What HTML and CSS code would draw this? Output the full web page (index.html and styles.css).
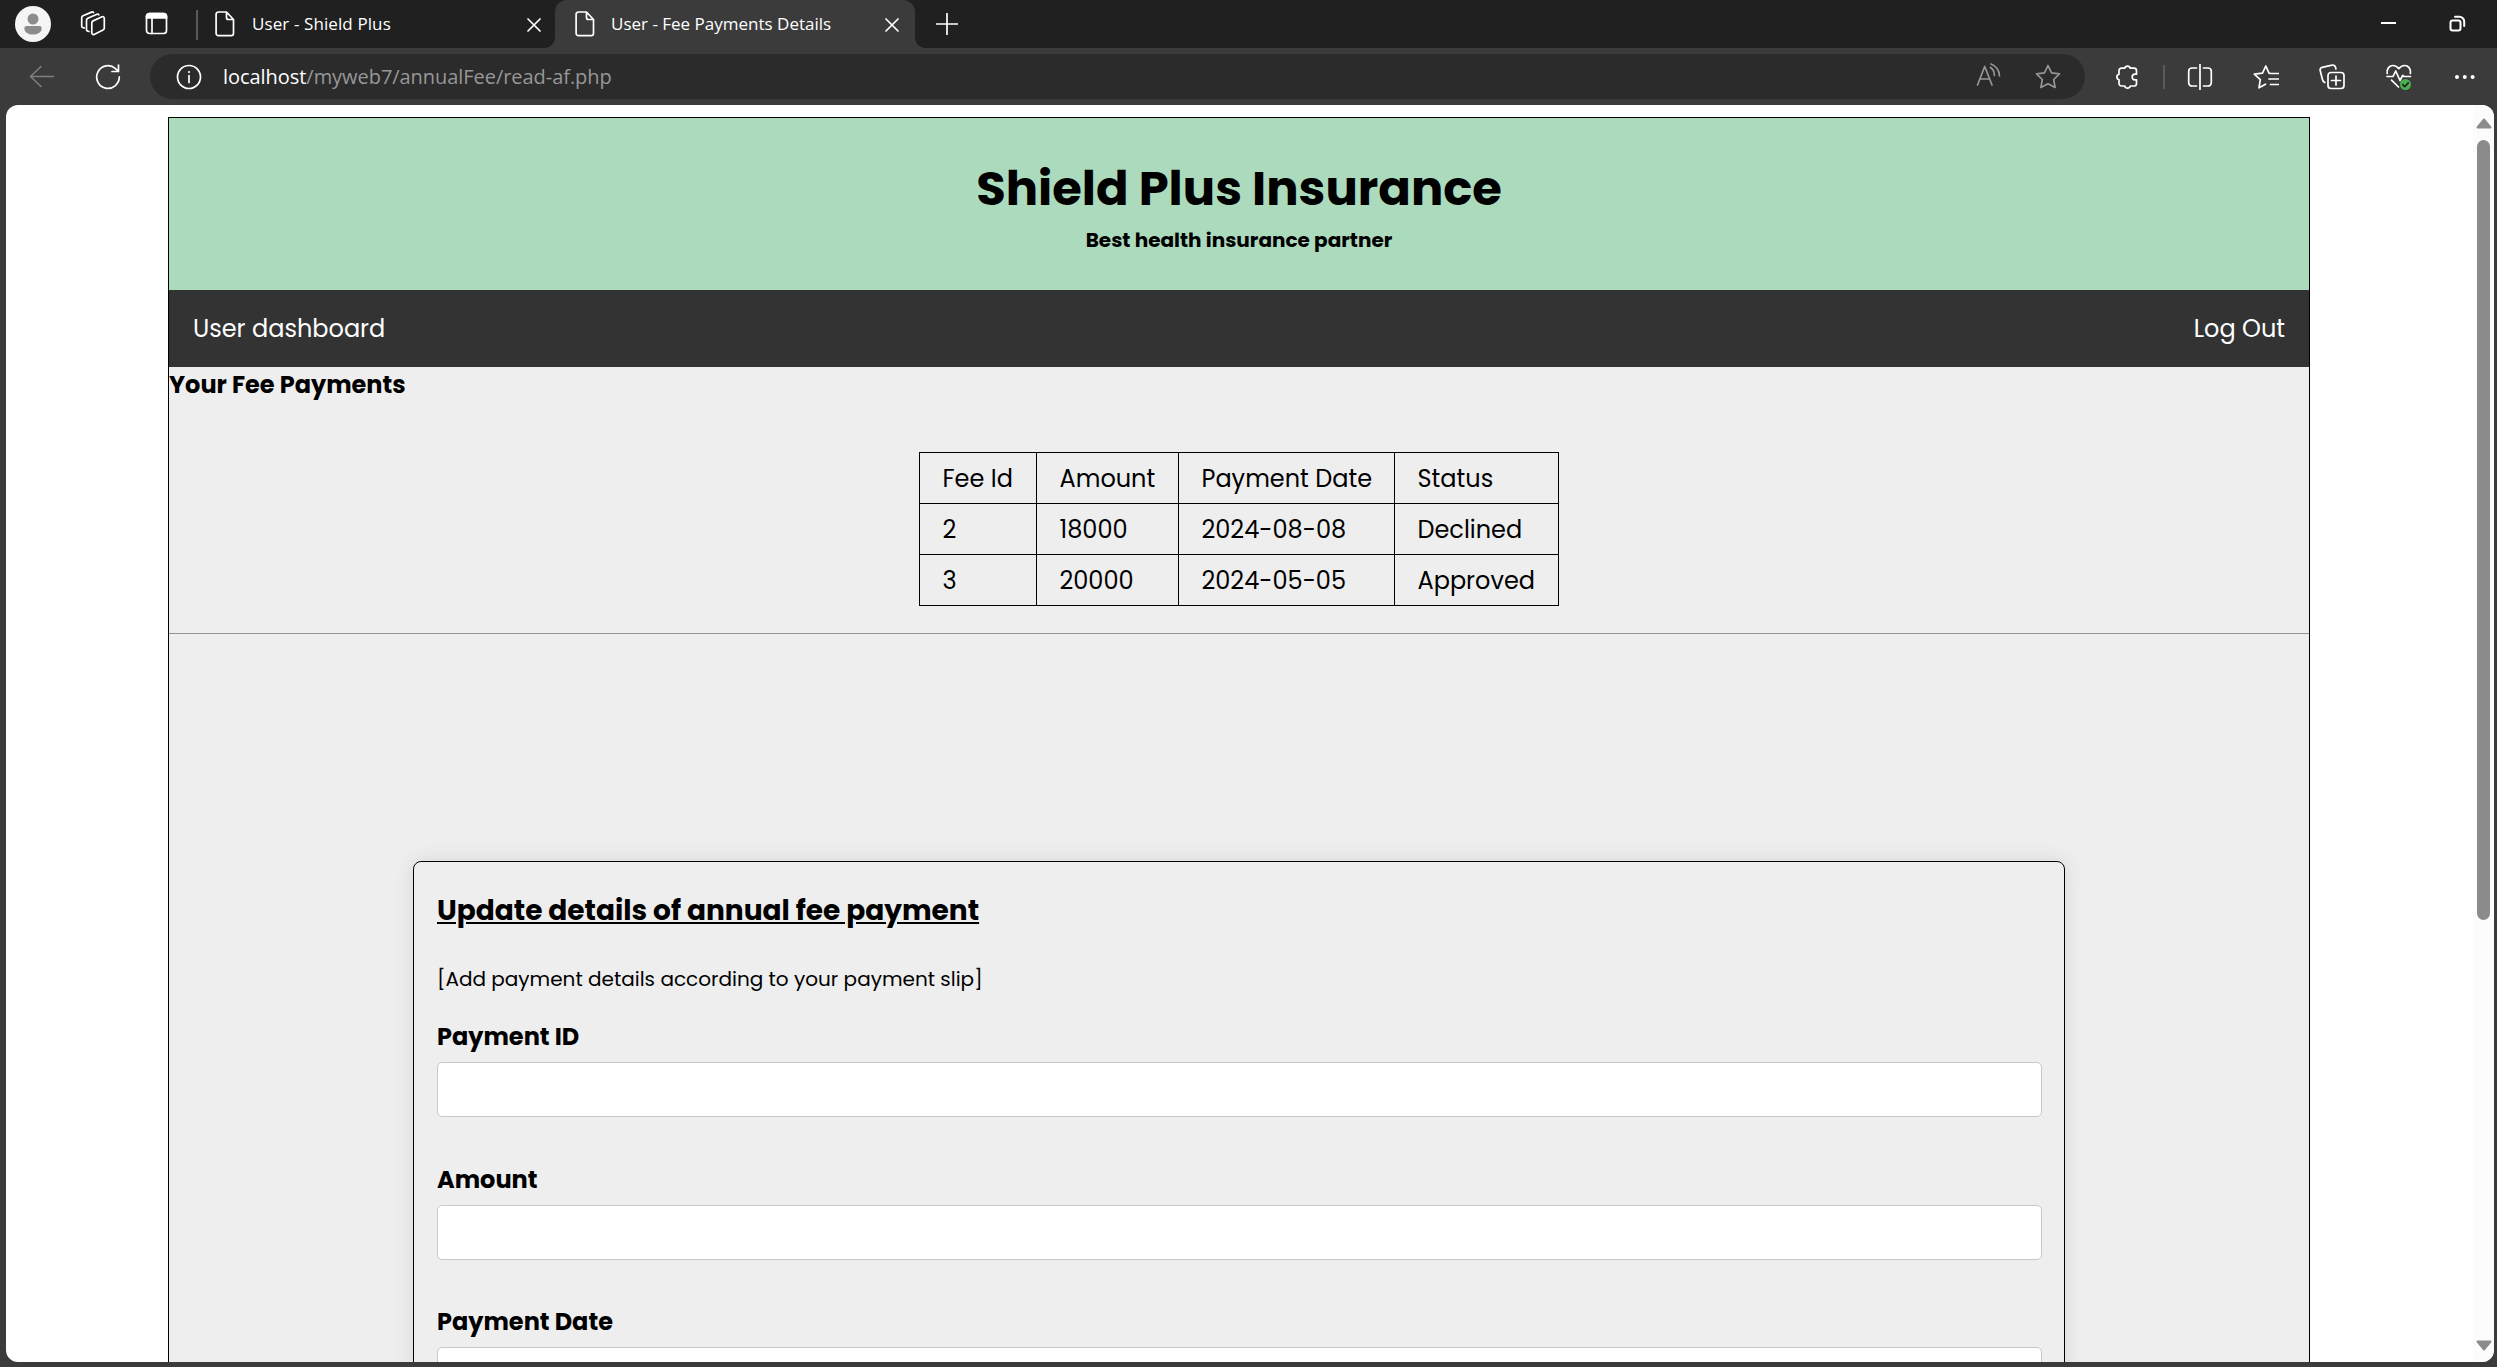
FILE: index.html
```html
<!DOCTYPE html>
<html lang="en">
<head>
<meta charset="utf-8">
<title>User - Fee Payments Details</title>
<link rel="stylesheet" href="styles.css">
</head>
<body>
<div class="browser">
  <div class="tabbar">
    <svg class="avatar" viewBox="0 0 36 36"><circle cx="18" cy="18" r="18" fill="#f5f5f5"/><circle cx="18" cy="13" r="5.500" fill="#8c8c8c"/><path d="M11.500 20h13a2.200 2.200 0 0 1 2.200 2.200c0 4-4 6.300-8.700 6.300s-8.700-2.300-8.700-6.300a2.200 2.200 0 0 1 2.200-2.200z" fill="#8c8c8c"/></svg>
    <svg class="ico stack" viewBox="0 0 26 26"><path d="M11.800 11.700a2.200 2.200 0 0 1 1.300-1.800l8.900-4.100a1.600 1.600 0 0 1 2.300 1.500v9.800a2.200 2.200 0 0 1-1.300 1.900l-8.900 4.400a1.600 1.600 0 0 1-2.300-1.500z"/><path d="M9 20.500l-1.200-.3a1.600 1.600 0 0 1-1.300-1.600V9.200a2.200 2.200 0 0 1 1.300-1.900L17 3.200a1.500 1.500 0 0 1 1.800.6"/><path d="M4.300 17l-1.300-.3a1.600 1.600 0 0 1-1.300-1.600V6.700A2.200 2.200 0 0 1 3 4.800l8.700-3.700a1.500 1.500 0 0 1 1.800.5"/></svg>
    <svg class="ico window" viewBox="0 0 24 24"><rect x="1.500" y="1.500" width="20" height="20" rx="3"/><path d="M1.500 6h20V4.500a3 3 0 0 0-3-3h-14a3 3 0 0 0-3 3z" fill="#fff"/><path d="M7 6v15.500"/></svg>
    <span class="divider"></span>
    <div class="tab">
      <svg class="ico doc" viewBox="0 0 20 26"><path d="M3.500 1h8L18.500 8.500v13.800a2.400 2.400 0 0 1-2.400 2.400H3.500a2.400 2.400 0 0 1-2.400-2.400V3.400A2.400 2.400 0 0 1 3.500 1zM11.500 1v5.500a2 2 0 0 0 2 2h5"/></svg>
      <span class="tab-title">User - Shield Plus</span>
      <svg class="ico close" viewBox="0 0 14 14"><path d="M1 1l12 12M13 1L1 13"/></svg>
    </div>
    <div class="tab active">
      <svg class="ico doc" viewBox="0 0 20 26"><path d="M3.500 1h8L18.500 8.500v13.800a2.400 2.400 0 0 1-2.400 2.400H3.500a2.400 2.400 0 0 1-2.400-2.400V3.400A2.400 2.400 0 0 1 3.500 1zM11.500 1v5.500a2 2 0 0 0 2 2h5"/></svg>
      <span class="tab-title">User - Fee Payments Details</span>
      <svg class="ico close" viewBox="0 0 14 14"><path d="M1 1l12 12M13 1L1 13"/></svg>
    </div>
    <svg class="ico plus" viewBox="0 0 22 22"><path d="M11 .5v21M.5 11h21"/></svg>
    <svg class="ico minimize" viewBox="0 0 16 16"><path d="M0 8h15"/></svg>
    <svg class="ico restore" viewBox="0 0 18 18"><rect x="1.500" y="5.500" width="10" height="10" rx="2.200"/><path d="M6 1.800h4.500a4.700 4.700 0 0 1 4.700 4.700v4.500"/></svg>
  </div>
  <div class="toolbar">
    <svg class="ico back" viewBox="0 0 26 24"><path d="M24.500 11.500H1.500M12 1.500L1.500 11.500 12 21.500"/></svg>
    <svg class="ico reload" viewBox="0 0 26 26"><path d="M24.300 12.800A11.300 11.300 0 1 1 20.500 4.600L23.500 7.500M23.500 1v6.500h-6.500"/></svg>
    <div class="address">
      <svg class="ico info" viewBox="0 0 26 26"><circle cx="13" cy="13" r="11.500"/><path d="M13 11.500v7"/><circle cx="13" cy="8" r="1.100" fill="#fff" stroke="none"/></svg>
      <span class="url"><b>localhost</b>/myweb7/annualFee/read-af.php</span>
      <svg class="ico dim read" viewBox="0 0 26 24"><path d="M1.500 22L8.700 3.500 16 22M4 16h9.500M14.500 4.500a9 9 0 0 1 3.800 8M15 1a13.500 13.500 0 0 1 8.500 12"/></svg>
      <svg class="ico dim star" viewBox="0 0 26 26"><path d="M13 1.500l3.500 7.300 8 1.100-5.800 5.600 1.400 8L13 19.700l-7.100 3.800 1.400-8-5.800-5.600 8-1.100z"/></svg>
    </div>
    <svg class="ico puzzle" viewBox="0 0 26 26"><path d="M7.500 4.200h3.200a2.900 2.900 0 0 1 5.600 0h3.700a2.500 2.500 0 0 1 2.500 2.500v3.500H21a2.800 2.800 0 0 0 0 5.600h1.500v3.700a2.500 2.500 0 0 1-2.500 2.500h-3.700a2.900 2.900 0 0 1-5.600 0H7.500A2.500 2.500 0 0 1 5 19.500v-3.700a2.900 2.900 0 0 1 0-5.600V6.700a2.500 2.500 0 0 1 2.500-2.500z"/></svg>
    <span class="divider"></span>
    <svg class="ico split" viewBox="0 0 26 26"><path d="M9.500 4H5a3.300 3.300 0 0 0-3.300 3.300v11.400A3.300 3.300 0 0 0 5 22h4.500M16.500 4H21a3.300 3.300 0 0 1 3.300 3.300v11.400A3.300 3.300 0 0 1 21 22h-4.500M13 .5v25"/></svg>
    <svg class="ico favs" viewBox="0 0 26 26"><path d="M17.500 9.500L16 9.200 12.800 2 9.500 9.200l-8.200 1 6 5.400L6 23.800l6.500-3.600M17.500 9.500h8M16 15h9.500M17.500 20.500h8"/></svg>
    <svg class="ico collections" viewBox="0 0 26 26"><rect x="9" y="8.500" width="16" height="16" rx="3"/><path d="M17 12v9M12.500 16.500h9M5.800 18.500a5 5 0 0 1-2.500-3.500L1.200 6.500A2.600 2.600 0 0 1 3.200 3.300l9.800-2.200A2.800 2.800 0 0 1 16.500 3.300l.4 1.700"/></svg>
    <svg class="ico health" viewBox="0 0 28 28"><path d="M2.200 10.500C1.500 5.500 4.500 2.500 8 2.500c2.500 0 4.300 1.200 5.800 3.200 1.500-2 3.300-3.200 5.800-3.200 3.500 0 6.500 3 5.800 8M2 13.500h6L10.700 8l4.300 9.500 2.700-5 1.300 1h6.500M6.500 17.200l7 6.800"/><circle cx="20.500" cy="21.500" r="5.500" fill="#4caf50" stroke="none"/><path d="M17.800 21.600l2 2 3.500-3.800" stroke="#222"/></svg>
    <svg class="ico dots" viewBox="0 0 22 6"><g fill="#fff" stroke="none"><circle cx="3" cy="3" r="2"/><circle cx="10.800" cy="3" r="2"/><circle cx="18.600" cy="3" r="2"/></g></svg>
  </div>
  <div class="viewport">
    <div class="scroller">
      <div class="page">
        <header class="header">
          <h1>Shield Plus Insurance</h1>
          <p>Best health insurance partner</p>
        </header>
        <nav class="nav"><a>User dashboard</a><a>Log Out</a></nav>
        <h3 class="heading">Your Fee Payments</h3>
        <table class="fees">
          <colgroup><col class="c-id"><col class="c-amount"><col class="c-date"><col class="c-status"></colgroup>
          <tr><td>Fee Id</td><td>Amount</td><td>Payment Date</td><td>Status</td></tr>
          <tr><td>2</td><td>18000</td><td>2024-08-08</td><td>Declined</td></tr>
          <tr><td>3</td><td>20000</td><td>2024-05-05</td><td>Approved</td></tr>
        </table>
        <hr class="rule">
        <form class="card">
          <h2>Update details of annual fee payment</h2>
          <p class="hint">[Add payment details according to your payment slip]</p>
          <div class="field"><label>Payment ID</label><input type="text"></div>
          <div class="field"><label>Amount</label><input type="text"></div>
          <div class="field"><label>Payment Date</label><input type="text"></div>
        </form>
      </div>
    </div>
    <div class="scrollbar">
      <svg class="arrow" viewBox="0 0 16 11"><path d="M8 1.500L14.500 9.500H1.500z"/></svg>
      <div class="thumb"></div>
      <svg class="arrow down" viewBox="0 0 16 11"><path d="M8 9.500L14.500 1.500H1.500z"/></svg>
    </div>
  </div>
</div>
</body>
</html>
```

FILE: styles.css
```css
* { box-sizing: border-box; }
html, body { margin: 0; height: 100%; overflow: hidden; }
h1, h2, h3, p { margin: 0; }

.browser {
  display: flex;
  flex-direction: column;
  height: 100vh;
  background: #3b3b3b;
  font-family: "Open Sans", "Noto Sans", sans-serif;
  color: #fff;
}

.ico {
  flex: none;
  fill: none;
  stroke: #fff;
  stroke-width: 1.7;
  stroke-linecap: round;
  stroke-linejoin: round;
}
.dim { stroke: #969696; }
.divider { flex: none; width: 2px; background: #5a5a5a; }

/* Tab strip */
.tabbar {
  display: flex;
  align-items: center;
  height: 48px;
  padding-left: 15px;
  background: #202020;
}
.avatar { width: 36px; height: 36px; }
.stack { width: 26px; height: 26px; margin-left: 29px; }
.window { width: 24px; height: 24px; margin-left: 39px; }
.tabbar .divider { height: 30px; margin-left: 27px; margin-top: 2px; }
.tab {
  display: flex;
  align-items: center;
  height: 48px;
  width: 357px;
  padding: 0 14px 0 17px;
}
.active {
  position: relative;
  width: 360px;
  padding: 0 16px 0 20px;
  background: #3b3b3b;
  border-radius: 12px 12px 0 0;
}
.active::before, .active::after {
  content: "";
  position: absolute;
  bottom: 0;
  width: 10px;
  height: 10px;
}
.active::before { left: -10px; background: radial-gradient(circle at 0 0, #202020 9.500px, #3b3b3b 10px); }
.active::after { right: -10px; background: radial-gradient(circle at 100% 0, #202020 9.500px, #3b3b3b 10px); }
.doc { width: 20px; height: 26px; }
.tab-title { margin-left: 16px; font-size: 17px; line-height: 24px; white-space: nowrap; }
.tab:not(.active) .tab-title { margin-left: 17px; letter-spacing: 0.1px; }
.tab .close { width: 14px; height: 14px; margin: 2px 0 0 auto; }
.plus { width: 22px; height: 22px; margin-left: 21px; }
.minimize { width: 16px; height: 16px; margin: 0 0 2px auto; stroke-linecap: butt; stroke-width: 2; }
.restore { width: 18px; height: 18px; margin: 0 30px 0 52px; stroke-width: 2; }

/* Toolbar */
.toolbar {
  display: flex;
  align-items: center;
  height: 57px;
  padding: 0 21px 0 29px;
}
.back { width: 26px; height: 24px; stroke: #808080; stroke-width: 1.5; }
.reload { width: 26px; height: 26px; margin-left: 40px; }
.address {
  display: flex;
  align-items: center;
  width: 1935px;
  height: 45px;
  margin-left: 29px;
  padding: 0 24px 0 26px;
  border-radius: 23px;
  background: #2b2b2b;
}
.info { width: 26px; height: 26px; }
.url { margin-left: 21px; font-size: 20px; line-height: 28px; letter-spacing: -0.05px; color: #979797; }
.url b { font-weight: 400; color: #fff; }
.read { width: 26px; height: 24px; margin: 0 0 3px auto; }
.star { width: 26px; height: 26px; margin-left: 33px; }
.puzzle { width: 26px; height: 26px; margin-left: 29px; }
.toolbar .divider { height: 24px; margin-left: 23px; }
.split { width: 26px; height: 26px; margin-left: 22px; }
.favs { width: 26px; height: 26px; margin-left: 40px; }
.collections { width: 26px; height: 26px; margin-left: 40px; }
.health { width: 28px; height: 28px; margin-left: 40px; }
.dots { width: 22px; height: 6px; margin-left: auto; }

/* Web page area */
.viewport {
  display: flex;
  height: 1257px;
  margin: 0 3px 0 6px;
  border-radius: 12px;
  background: #fff;
  overflow: hidden;
}
.scroller { flex: 1; padding: 12px 0 0 162px; overflow: hidden; }
.page {
  width: 2142px;
  height: 1500px;
  border: 1px solid #000;
  background: #eee;
  color: #000;
  font-family: Poppins, Inter, sans-serif;
  font-size: 24px;
  line-height: 36px;
}
.header {
  height: 172px;
  padding-top: 35px;
  background: #abdabc;
  text-align: center;
}
.header h1 { font-size: 48px; line-height: 72px; }
.header p { font-size: 20px; line-height: 30px; font-weight: 700; }
.nav {
  display: flex;
  justify-content: space-between;
  align-items: center;
  height: 77px;
  padding: 1px 24px 0;
  background: #333;
  color: #fff;
}
.heading { font-size: 24px; line-height: 36px; }

.fees {
  width: 640px;
  margin: 49px auto 0;
  table-layout: fixed;
  border-collapse: collapse;
}
.fees td { height: 51px; padding: 2px 0 0 22.500px; border: 1px solid #000; }
.c-id { width: 117px; }
.c-amount { width: 142px; }
.c-date { width: 216px; }
.rule { height: 1px; margin: 27px 0 0; border: 0; background: #949494; }

.card {
  width: 1652px;
  height: 900px;
  margin: 227px auto 0;
  padding: 28px 22px 0 23px;
  border: 1px solid #000;
  border-radius: 8px;
  box-shadow: 0 0 20px rgba(0, 0, 0, 0.1);
}
.card h2 { font-size: 28px; line-height: 42px; text-decoration: underline; }
.hint { margin: 32px 0 25px; font-size: 20px; line-height: 30px; }
.field { margin-bottom: 44.500px; }
.field label { display: block; font-weight: 700; }
.field input {
  display: block;
  width: 100%;
  height: 55px;
  margin-top: 7px;
  border: 1px solid #c8c8c8;
  border-radius: 5px;
  background: #fff;
}

/* Scrollbar */
.scrollbar {
  display: flex;
  flex-direction: column;
  align-items: center;
  width: 21px;
  padding: 13px 0 11px;
  background: #fcfcfc;
}
.thumb { width: 13px; height: 780px; margin-top: 11px; border-radius: 7px; background: #8b8b8b; }
.arrow { width: 16px; height: 11px; fill: #8b8b8b; stroke: #8b8b8b; stroke-width: 2; stroke-linejoin: round; }
.down { margin-top: auto; }
```
